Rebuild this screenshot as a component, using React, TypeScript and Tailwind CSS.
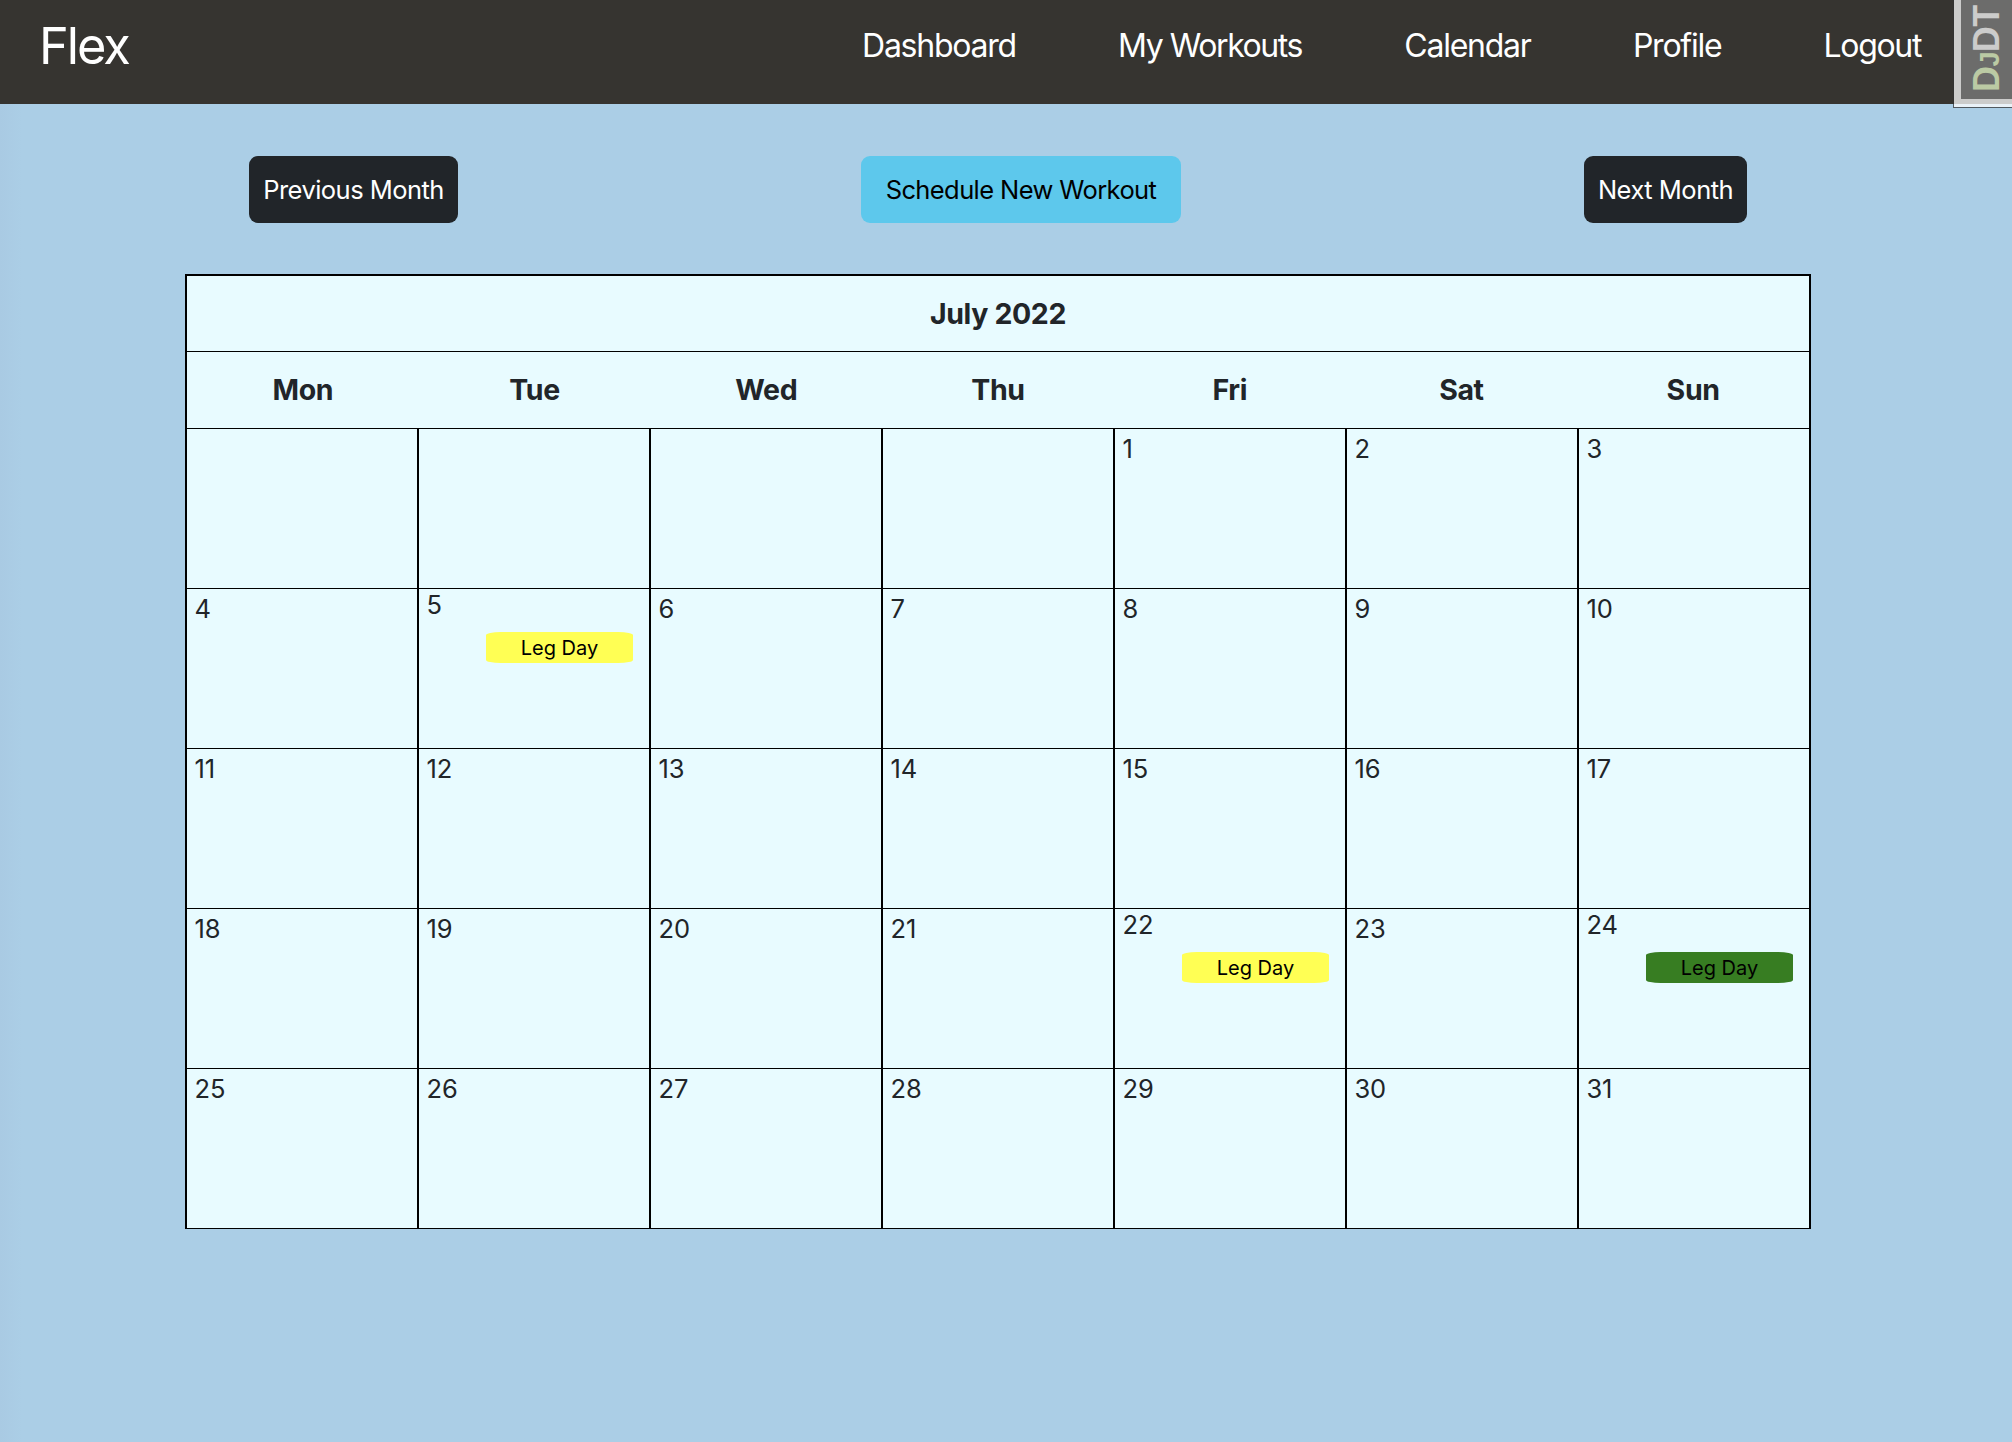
type Workout = { label: string; tone: "planned" | "done" };

const links = [
  { label: "Dashboard", tracking: "tracking-[-1.26px]" },
  { label: "My Workouts", tracking: "tracking-[-1.43px]" },
  { label: "Calendar", tracking: "tracking-[-1.25px]" },
  { label: "Profile", tracking: "tracking-[-1.25px]" },
  { label: "Logout", tracking: "tracking-[-1.35px]" },
];

const weekdays = ["Mon", "Tue", "Wed", "Thu", "Fri", "Sat", "Sun"];

const workouts: Record<number, Workout> = {
  5: { label: "Leg Day", tone: "planned" },
  22: { label: "Leg Day", tone: "planned" },
  24: { label: "Leg Day", tone: "done" },
};

const LEADING_BLANKS = 4;
const DAYS_IN_MONTH = 31;

function NavBar() {
  return (
    <nav className="flex h-[104px] items-center justify-between bg-[#363430] pr-[91px] pb-[13px] pl-[39px] text-white">
      <a className="pt-0.5 text-[50.5px] leading-none tracking-[-2.05px]">Flex</a>
      <ul className="flex gap-[102.3px] text-[32px] leading-none whitespace-nowrap">
        {links.map((link) => (
          <li key={link.label} className={link.tracking}>
            {link.label}
          </li>
        ))}
      </ul>
    </nav>
  );
}

function DebugToolbarHandle() {
  return (
    <div className="absolute top-0 right-0 h-[108px] w-[59px] border-b border-l border-[#333] opacity-75">
      <div className="relative h-full border-b-8 border-l-[7px] border-white bg-[#7f7f7f]">
        <div className="absolute top-[92px] left-[7px] origin-top-left -rotate-90 font-['Liberation_Sans',Arial,sans-serif] text-[36px] leading-[37px] font-bold tracking-[-0.6px] whitespace-nowrap text-white">
          <span className="text-[#e8fdcb]">
            D<span className="text-[27px] leading-none">J</span>
          </span>
          DT
        </div>
      </div>
    </div>
  );
}

function MonthControls() {
  return (
    <div className="mx-auto flex h-[67px] w-[1498px] justify-between text-[25.5px] leading-none whitespace-nowrap">
      <button className="w-[209px] rounded-[9px] bg-[#212529] tracking-[-0.54px] text-white">Previous Month</button>
      <button className="w-[320px] rounded-[9px] bg-[#5dc8ec] tracking-[-0.6px] text-black">
        Schedule New Workout
      </button>
      <button className="w-[163px] rounded-[9px] bg-[#212529] tracking-[-0.5px] text-white">Next Month</button>
    </div>
  );
}

function DayCell({ day }: { day?: number }) {
  const workout = day ? workouts[day] : undefined;
  return (
    <div
      className={`h-40 border-b border-l-2 border-black pl-[7.5px] ${workout ? "pt-px" : "pt-[5px]"}`}
    >
      <div className="h-[30px] text-[25.5px] leading-[30px] tracking-[-0.15px]">{day}</div>
      {workout && (
        <div
          className={`mt-3 mr-4 ml-auto flex h-[31px] w-[147px] items-center justify-center rounded-[10%] text-[20px] leading-none text-black ${
            workout.tone === "done" ? "bg-[#377d22]" : "bg-[#ffff54]"
          }`}
        >
          {workout.label}
        </div>
      )}
    </div>
  );
}

function Calendar() {
  const cells: (number | undefined)[] = [
    ...Array.from({ length: LEADING_BLANKS }, () => undefined),
    ...Array.from({ length: DAYS_IN_MONTH }, (_, i) => i + 1),
  ];
  return (
    <section className="mx-auto mt-[51px] w-[1626px] border-t-2 border-r-2 border-black bg-[#e8fbff] text-[#212529]">
      <h1 className="flex h-[76px] items-center justify-center border-b border-l-2 border-black pt-0.5 text-[28.5px] leading-none font-bold tracking-[-0.37px]">
        July 2022
      </h1>
      <div className="grid h-[77px] grid-cols-7 items-center border-b border-l-2 border-black text-center text-[28.5px] leading-none font-bold tracking-[-0.37px]">
        {weekdays.map((name) => (
          <div key={name}>{name}</div>
        ))}
      </div>
      <div className="grid grid-cols-7">
        {cells.map((day, i) => (
          <DayCell key={i} day={day} />
        ))}
      </div>
    </section>
  );
}

export default function App() {
  return (
    <div className="relative min-h-screen overflow-hidden bg-[#abcee6] bg-linear-to-r from-[#a9cae3] from-0% to-[#abcee6] to-[22px] font-['Inter',sans-serif]">
      <NavBar />
      <main className="pt-[52px] pr-4">
        <MonthControls />
        <Calendar />
      </main>
      <DebugToolbarHandle />
    </div>
  );
}
